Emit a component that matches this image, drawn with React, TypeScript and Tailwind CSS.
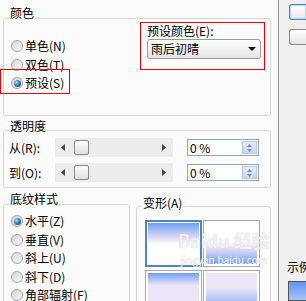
import React from 'react'

const font = "[font-family:'Noto_Sans_CJK_SC','Noto_Sans',sans-serif]"

function Radio({ checked }: { checked?: boolean }) {
  return (
    <span className="flex h-[12px] w-[12px] shrink-0 items-center justify-center rounded-full border border-[#a4a4a4] bg-[linear-gradient(135deg,#d4d4d4,#fafafa)]">
      {checked && (
        <span className="h-[7px] w-[7px] rounded-full bg-[radial-gradient(circle_at_35%_35%,#a8dcf8,#2a6da3_55%,#123e66)]" />
      )}
    </span>
  )
}

function RadioRow({ label, checked }: { label: string; checked?: boolean }) {
  return (
    <div className="flex h-[18.5px] items-center gap-[2px]">
      <Radio checked={checked} />
      <span className="whitespace-nowrap text-[12px] leading-[14px] text-black">{label}</span>
    </div>
  )
}

function Group({ label, top, className, children }: { label: string; top: string; className: string; children: React.ReactNode }) {
  return (
    <div className={`relative rounded-[3px] border border-[#d5d5d5] ${className}`}>
      <span className={`absolute left-[5px] ${top} bg-[#fbfbfb] px-[1px] text-[12px] leading-[14px] text-black`}>{label}</span>
      {children}
    </div>
  )
}

function Slider() {
  return (
    <div className="relative flex h-[19px] w-[118px] items-center bg-[#ececec]">
      <svg width="4" height="7" viewBox="0 0 4 7" className="ml-[6px]">
        <path d="M4 0 L0 3.5 L4 7 Z" fill="#444" />
      </svg>
      <span className="ml-[9px] h-[15px] w-[15px] rounded-[2px] border border-[#8a8a8a] bg-[linear-gradient(#ffffff,#dedede)]" />
      <svg width="4" height="7" viewBox="0 0 4 7" className="ml-auto mr-[7px]">
        <path d="M0 0 L4 3.5 L0 7 Z" fill="#444" />
      </svg>
    </div>
  )
}

function Spin() {
  return (
    <div className="ml-[14px] flex h-[17px] w-[72px] items-center border border-[#8fa6bf] bg-white">
      <span className="pl-[2px] text-[12px] leading-[14px] text-black">0 %</span>
      <div className="ml-auto mr-[1px] flex h-[13px] w-[15px] flex-col items-center justify-center gap-[2px] border border-[#b8c8de] bg-[linear-gradient(#e4ecfa,#c6d5ef)]">
        <svg width="5" height="3" viewBox="0 0 5 3"><path d="M2.5 0 L5 3 L0 3 Z" fill="#7d8ca6" /></svg>
        <svg width="5" height="3" viewBox="0 0 5 3"><path d="M0 0 L5 0 L2.5 3 Z" fill="#7d8ca6" /></svg>
      </div>
    </div>
  )
}

function Swatch({ bg, selected }: { bg: string; selected?: boolean }) {
  return (
    <div className={selected ? 'h-[47px] border-2 border-[#4f86bd] p-[1px] bg-white' : 'h-[47px] border border-[#a8a8a8] p-[2px] bg-white'}>
      <div className={`h-full w-full ${bg}`} />
    </div>
  )
}

export default function App() {
  return (
    <div className={`flex h-[301px] w-[306px] overflow-hidden bg-[#efefef] ${font}`}>
      <div className="flex w-[279px] shrink-0 flex-col">
        {/* tab strip, mostly cut off above */}
        <div className="flex h-[6px] overflow-hidden">
          <div className="w-[45px] bg-[#fbfbfb]">
            <div className="-mt-[10px] pl-[5px] text-[12px] leading-[14px] text-black">渐变</div>
          </div>
          <div className="-mt-[12px] h-[18px] w-[47px] border-x border-[#919b9c] bg-[linear-gradient(#fafafa,#dcdcdc)] pt-[2px] text-center text-[12px] leading-[14px] text-black">纹理</div>
          <div className="-mt-[12px] ml-[1px] h-[18px] w-[46px] border-x border-[#919b9c] bg-[linear-gradient(#fafafa,#dcdcdc)] pt-[2px] text-center text-[12px] leading-[14px] text-black">图案</div>
          <div className="-mt-[12px] ml-[2px] h-[18px] w-[45px] border-x border-[#919b9c] bg-[linear-gradient(#fafafa,#dcdcdc)] pt-[2px] text-center text-[12px] leading-[14px] text-black">图片</div>
          <div className="flex-1 border-r border-b border-[#919b9c]" />
        </div>

        <div className="relative flex-1 border-r border-[#919b9c] bg-[#fbfbfb]">
          <Group label="颜色" top="-top-[13px]" className="ml-[3px] mt-[18px] flex h-[98px] w-[268px]">
            <div className="flex-1 pl-[7px] pt-[18px]">
              <RadioRow label="单色(N)" />
              <RadioRow label="双色(T)" />
              <RadioRow label="预设(S)" checked />
            </div>
            <div className="mr-[5px] mt-[3px] h-[48px] w-[125px] border border-[#f00000] pl-[6px] pt-[1px]">
              <div className="text-[12px] leading-[14px] text-black">预设颜色(E):</div>
              <div className="mt-[1px] flex h-[20px] w-[114px] items-center rounded-[3px] border border-[#9a9a9a] bg-[linear-gradient(#fdfdfd,#e6e6e6)] pl-[3px] pr-[3px]">
                <span className="text-[12px] leading-[14px] text-black">雨后初晴</span>
                <svg width="8" height="4" viewBox="0 0 8 4" className="ml-auto mr-[1px]">
                  <path d="M0 0 L8 0 L4 4 Z" fill="#111" />
                </svg>
              </div>
            </div>
          </Group>

          <Group label="透明度" top="-top-[12px]" className="ml-[3px] mt-[14px] h-[58px] w-[268px] pt-[7px]">
            <div className="flex h-[19px] items-center">
              <span className="w-[51px] pl-[5px] text-[12px] leading-[14px] text-black">从(R):</span>
              <Slider />
              <Spin />
            </div>
            <div className="mt-[6px] flex h-[19px] items-center">
              <span className="w-[51px] pl-[5px] text-[12px] leading-[14px] text-black">到(O):</span>
              <Slider />
              <Spin />
            </div>
          </Group>

          <div className="mt-[16px] flex items-start">
            <Group label="底纹样式" top="-top-[13px]" className="ml-[3px] h-[110px] w-[127px] pl-[7px] pt-[7px]">
              <RadioRow label="水平(Z)" checked />
              <RadioRow label="垂直(V)" />
              <RadioRow label="斜上(U)" />
              <RadioRow label="斜下(D)" />
              <RadioRow label="角部辐射(F)" />
            </Group>
            <Group label="变形(A)" top="-top-[11px]" className="ml-[6px] mt-[2px] h-[110px] w-[135px] pl-[8px] pt-[13px]">
              <div className="grid grid-cols-[57px_57px] gap-x-[1px] gap-y-[3px]">
                <Swatch selected bg="bg-[linear-gradient(#6f9ff6_0%,#e6def5_38%,#ffffff_52%,#ffffff_100%)]" />
                <Swatch bg="bg-[linear-gradient(#ffffff_0%,#ffffff_45%,#e6def5_62%,#6f9ff6_100%)]" />
                <Swatch bg="bg-[linear-gradient(#6f9ff6_0%,#ece5f5_30%,#ece5f5_100%)]" />
                <Swatch bg="bg-[linear-gradient(#ece5f5_0%,#ece5f5_35%,#6f9ff6_100%)]" />
              </div>
            </Group>
          </div>

          {/* red annotation round the preset radio */}
          <div className="absolute left-0 top-[69px] h-[25px] w-[70px] border border-[#f00000]" />

          {/* faint watermark */}
          <div className="pointer-events-none absolute left-[178px] top-[230px] flex flex-col items-center gap-[4px] text-white/75 [text-shadow:0_0_1px_#c4c4c4]">
            <span className="text-[18px] font-bold leading-[20px]">Baidu 经验</span>
            <span className="text-[10px] leading-[11px]">jingyan.baidu.com</span>
          </div>
        </div>
      </div>

      <div className="flex min-w-0 flex-1 flex-col">
        <div className="ml-[10px] mt-[4px] h-[19px] rounded-l-[3px] border border-r-0 border-[#4a86c8] bg-[linear-gradient(#ffffff,#e8e8e8)] shadow-[inset_0_0_0_1px_#bcd6f3]" />
        <div className="ml-[10px] mt-[9px] h-[19px] rounded-l-[3px] border border-r-0 border-[#8a8a8a] bg-[linear-gradient(#ffffff,#e4e4e4)]" />
        <div className="ml-[8px] mt-[215px] whitespace-nowrap text-[12px] leading-[14px] text-black">示例</div>
        <div className="ml-[9px] mt-[7px] h-[20px] shrink-0 border border-[#555] border-r-0 bg-[linear-gradient(#5f95f4,#a9c4f8)]" />
      </div>
    </div>
  )
}
